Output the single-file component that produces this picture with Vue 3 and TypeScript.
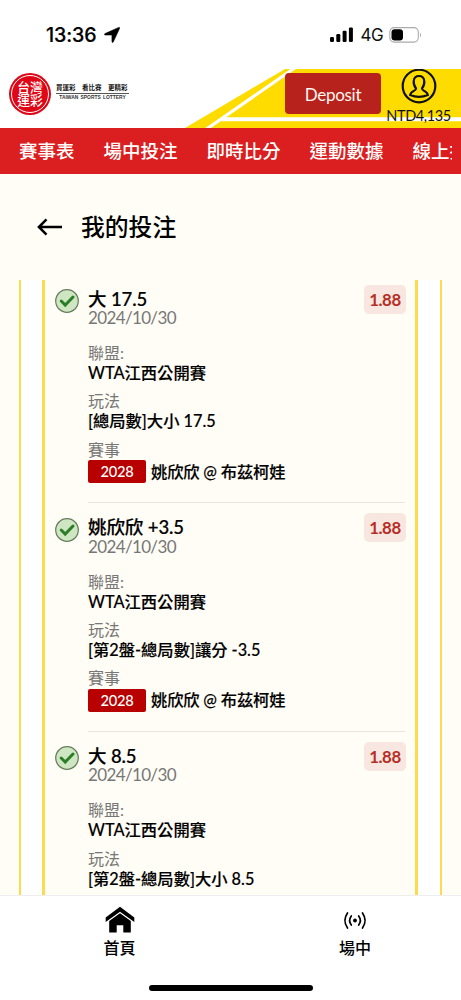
<script setup lang="ts">
interface Field { label: string; value: string }
interface Bet { title: string; odds: string; fields: Field[] }

const nav: string[] = ['賽事表', '場中投注', '即時比分', '運動數據', '線上投注']
const bets: Bet[] = [
  { title: '大 17.5', odds: '1.88', fields: [{ label: '聯盟:', value: 'WTA江西公開賽' }, { label: '玩法', value: '[總局數]大小 17.5' }] },
  { title: '姚欣欣 +3.5', odds: '1.88', fields: [{ label: '聯盟:', value: 'WTA江西公開賽' }, { label: '玩法', value: '[第2盤-總局數]讓分 -3.5' }] },
  { title: '大 8.5', odds: '1.88', fields: [{ label: '聯盟:', value: 'WTA江西公開賽' }, { label: '玩法', value: '[第2盤-總局數]大小 8.5' }] },
]
</script>

<template>
  <div class="screen">
    <div class="status">
      <span class="clock">13:36</span>
      <svg class="loc" width="16" height="16" viewBox="0 0 16 16"><path d="M14.6 .4Q16 .1 15.6 1.4L9.3 15Q8.3 16.4 7.9 14.5V8.6Q7.9 8.1 7.4 8.1H1.2Q-.6 7.6 1 6.6Z" stroke="#000" stroke-width=".5" /></svg>
      <span class="grow"></span>
      <svg class="signal" width="24" height="16" viewBox="0 0 24 16"><rect x="0" y="10" width="4" height="5" rx="1.2" /><rect x="6.3" y="7" width="4" height="8" rx="1.2" /><rect x="12.6" y="3.8" width="4" height="11.2" rx="1.2" /><rect x="18.9" y=".5" width="4" height="14.5" rx="1.2" /></svg>
      <span class="net">4G</span>
      <svg class="battery" width="34" height="16" viewBox="0 0 34 16"><rect x=".8" y=".6" width="28.5" height="14.5" rx="4.5" fill="#fff" stroke="#aaa" stroke-width="1.1" /><rect x="2.5" y="2.3" width="11.5" height="11.2" rx="3.2" /><path d="M31 5.5Q33 8 31 10.5Z" fill="#aaa" /></svg>
    </div>

    <header class="header">
      <svg class="stripes" width="276" height="59" viewBox="0 0 276 59">
        <path d="M0 59L100 0H276V59Z" fill="#ffdc00" />
        <path d="M21 60.5L111 -2" stroke="#fff" stroke-width="3.2" />
        <path d="M36 50.3H276" stroke="#fff" stroke-width="4" />
      </svg>
      <div class="logo">
        <div class="seal"><div class="seal-text"><span>台灣</span><span>運彩</span></div></div>
        <div class="tagline"><span class="zh">買運彩　看比賽　更精彩</span><span class="en">TAIWAN SPORTS LOTTERY</span></div>
      </div>
      <span class="grow"></span>
      <button class="deposit">Deposit</button>
      <div class="account">
        <svg width="36" height="36" viewBox="0 0 36 36" fill="none" stroke="#111" stroke-width="2.2">
          <circle cx="18" cy="17" r="16.3" />
          <path d="M15 19.5C11.8 15.5 11.2 7 18 7S24.2 15.5 21 19.5C20.6 22 26.2 21.8 26.8 26Q18 29.8 9.2 26C9.8 21.8 15.4 22 15 19.5Z" />
        </svg>
        <span class="balance">NTD4,135</span>
      </div>
    </header>

    <nav class="nav"><div class="nav-track"><a v-for="n in nav" :key="n">{{ n }}</a></div></nav>

    <div class="heading">
      <svg width="26" height="20" viewBox="0 0 26 20" fill="none" stroke="#000" stroke-width="2.5"><path d="M25 10H2M9.5 2.4L1.9 10L9.5 17.6" /></svg>
      <h1>我的投注</h1>
    </div>

    <main class="outer">
      <div class="inner">
        <article v-for="b in bets" :key="b.title" class="bet">
          <svg class="check" width="24" height="24" viewBox="0 0 24 24"><circle cx="12" cy="12" r="11.3" fill="#cfe6c2" stroke="#647b5c" stroke-width="1.2" /><path d="M6.2 12L10.2 16L18 8" fill="none" stroke="#2c7d27" stroke-width="3" stroke-linecap="round" /></svg>
          <div class="content">
            <div class="top"><h2>{{ b.title }}</h2><span class="odds">{{ b.odds }}</span></div>
            <div class="date">2024/10/30</div>
            <dl>
              <template v-for="f in b.fields" :key="f.label"><dt>{{ f.label }}</dt><dd>{{ f.value }}</dd></template>
              <dt>賽事</dt><dd class="match"><span class="code">2028</span>姚欣欣 @ 布茲柯娃</dd>
            </dl>
          </div>
        </article>
      </div>
    </main>

    <footer class="tabs">
      <div class="tab">
        <svg width="30" height="28" viewBox="0 0 30 28"><path d="M15 .8L29.3 11.5V16L15 5.8L.7 16V11.5Z" /><path d="M15 7.2L25.8 15V26.5H18.3V19.3H11.7V26.5H4.2V15Z" /></svg>
        <span>首頁</span>
      </div>
      <div class="tab">
        <svg width="30" height="28" viewBox="0 0 30 28" fill="none" stroke="#000" stroke-width="1.7" stroke-linecap="round"><circle cx="15" cy="14.5" r="1.9" fill="#000" stroke="none" /><path d="M11.3 10Q8 14.5 11.3 19M18.7 10Q22 14.5 18.7 19M7.5 7Q2.3 14.5 7.5 22M22.5 7Q27.7 14.5 22.5 22" /></svg>
        <span>場中</span>
      </div>
      <div class="home-bar"></div>
    </footer>
  </div>
</template>

<style>
body { margin: 0; overflow: hidden; }
</style>
<style scoped>
* { box-sizing: border-box; }
.screen { width: 461px; height: 1000px; display: flex; flex-direction: column; overflow: hidden; background: #fffdf5; color: #111; font-family: Lato, "Noto Sans CJK TC", sans-serif; }
.status { height: 69px; flex: none; background: #fff; display: flex; align-items: center; padding: 0 38px 0 46px; font-family: Inter, sans-serif; }
.clock { font-size: 19.6px; font-weight: 500; letter-spacing: -.1px; width: 58px; white-space: nowrap; color: #000; -webkit-text-stroke: .2px #000; }
.status svg { flex: none; }
.signal { margin-right: 7px; }
.grow { flex: 1; }
.net { font-size: 17px; letter-spacing: -.6px; margin-right: 6px; }
.header { height: 59px; flex: none; background: #fff; display: flex; position: relative; }
.stripes { position: absolute; left: 185px; top: 0; }
.logo { display: flex; padding: 4px 0 0 9px; }
.seal { width: 42px; height: 42px; border-radius: 50%; background: #df0716; padding: 2px; }
.seal-text { width: 38px; height: 38px; border: 1px solid #fff; border-radius: 50%; color: #fff; font-weight: 500; font-size: 12.8px; display: flex; flex-direction: column; align-items: center; justify-content: center; }
.seal-text span { line-height: 13px; }
.tagline { margin: 10px 0 0 5px; width: 73px; display: flex; flex-direction: column; align-items: center; white-space: nowrap; }
.zh { width: 73px; height: 11px; border-bottom: 1px solid #555; font-size: 6.5px; line-height: 10px; font-weight: 700; }
.en { font: 700 4.9px/8px "Liberation Sans", sans-serif; color: #333; word-spacing: 1px; }
.deposit { position: relative; width: 96px; height: 41px; margin: 4px 5px 0 0; border: 0; border-radius: 4px; background: #b7221d; color: #fff5ee; font: 400 17px Lato, sans-serif; letter-spacing: -.3px; padding: 2px 0 0; }
.account { position: relative; width: 65px; margin-right: 10px; display: flex; flex-direction: column; align-items: center; }
.balance { font-size: 14.5px; line-height: 18px; margin-top: 2px; letter-spacing: -.4px; white-space: nowrap; }
.nav { height: 46px; flex: none; background: #db1f20; padding-left: 19px; }
.nav-track { width: 433px; display: flex; gap: 29px; overflow: hidden; white-space: nowrap; color: #fff; font-size: 18.5px; line-height: 46px; font-weight: 500; }
.nav a { flex: none; }
.heading { height: 106px; flex: none; display: flex; gap: 18px; padding: 43px 0 0 37px; }
.heading h1 { margin: -4px 0 0; font-size: 23.8px; line-height: 28px; font-weight: 500; color: #000; }
.outer { flex: 1; min-height: 0; overflow: hidden; margin: 0 19px; border: solid #fbdc50; border-width: 0 2px; background: #fff; padding: 0 22px 0 21px; }
.inner { border: solid #fbdc50; border-width: 0 3px; background: #fffdf5; padding: 0 10px; }
.bet { height: 228.7px; display: flex; padding-top: 4.5px; }
.check { margin: 4.5px 9px 0 0; flex: none; }
.content { flex: 1; height: 218.5px; border-bottom: 1px solid #e7e5df; }
.top { height: 24.5px; display: flex; justify-content: space-between; margin-right: -1px; }
h2 { margin: 0; font-size: 18.5px; line-height: 28px; font-weight: 500; color: #000; -webkit-text-stroke: .2px #000; letter-spacing: -.1px; }
.odds { height: 29px; width: 42px; border-radius: 5px; background: #f8e7e1; color: #b72d25; font-size: 16.8px; line-height: 29px; font-weight: 700; letter-spacing: -.4px; text-align: center; }
.date { font-size: 17px; line-height: 18px; letter-spacing: -.64px; color: #777; }
dl { margin: 16px 0 0; font-size: 16px; }
dt { height: 20px; line-height: 20px; color: #777; }
dd { height: 20px; line-height: 20px; margin: 0 0 8.3px; font-size: 16.3px; font-weight: 500; color: #000; -webkit-text-stroke: .15px #000; white-space: nowrap; }
.match { display: flex; align-items: center; height: 24px; gap: 5px; letter-spacing: -.15px; }
.code { width: 58px; height: 23px; border-radius: 2px; background: #b90000; color: #fff; font-size: 14.7px; line-height: 23px; text-align: center; -webkit-text-stroke: 0; letter-spacing: -.3px; }
.tabs { position: relative; height: 105px; flex: none; background: #fff; border-top: 1px solid #eee; display: grid; grid-template-columns: 239px 222px; padding-top: 10px; align-items: start; }
.tab { display: flex; flex-direction: column; align-items: center; font-size: 16px; line-height: 24px; font-weight: 500; gap: 2px; color: #000; }
.tab:nth-child(2) { padding-left: 10px; }
.home-bar { position: absolute; left: 149px; bottom: 9px; width: 164px; height: 6px; border-radius: 3px; background: #000; }
</style>
